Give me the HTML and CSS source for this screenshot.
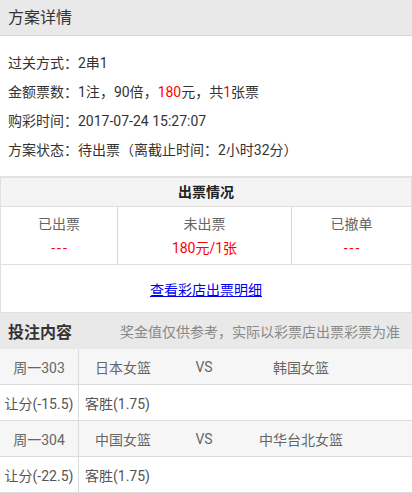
FILE: index.html
```html
<!DOCTYPE html>
<html lang="zh">
<head>
<meta charset="utf-8">
<link rel="stylesheet" href="styles.css">
</head>
<body>
<div class="bar title">方案详情</div>
<div class="details">
  <div class="line">过关方式<span class="p">：</span>2串1</div>
  <div class="line">金额票数<span class="p">：</span>1注<span class="p">，</span>90倍<span class="p">，</span><span class="red">180</span>元<span class="p">，</span>共<span class="red">1</span>张票</div>
  <div class="line">购彩时间<span class="p">：</span>2017-07-24 15:27:07</div>
  <div class="line">方案状态<span class="p">：</span>待出票<span class="p">（</span>离截止时间<span class="p">：</span>2小时32分<span class="p">）</span></div>
</div>
<div class="ticket">
  <div class="ticket-head">出票情况</div>
  <div class="ticket-cells">
    <div class="cell c1"><div class="label">已出票</div><div class="red dash">---</div></div>
    <div class="cell c2"><div class="label">未出票</div><div class="red">180元/1张</div></div>
    <div class="cell c3"><div class="label">已撤单</div><div class="red dash">---</div></div>
  </div>
  <div class="link-row"><a href="#" class="link">查看彩店出票明细</a></div>
</div>
<div class="bar bet-title"><span class="bt">投注内容</span><span class="note">奖金值仅供参考<span class="p">，</span>实际以彩票店出票彩票为准</span></div>
<div class="bets">
  <div class="row match"><div class="num">周一303</div><div class="team">日本女篮</div><div class="vs">VS</div><div class="team">韩国女篮</div><div></div></div>
  <div class="row pick"><div class="num">让分(-15.5)</div><div class="sel">客胜(1.75)</div></div>
  <div class="row match"><div class="num">周一304</div><div class="team">中国女篮</div><div class="vs">VS</div><div class="team">中华台北女篮</div><div></div></div>
  <div class="row pick"><div class="num">让分(-22.5)</div><div class="sel">客胜(1.75)</div></div>
</div>
</body>
</html>
```
FILE: styles.css
```css
* { box-sizing: border-box; }
body {
  margin: 0;
  font-family: Roboto, "Noto Sans CJK SC", sans-serif;
  font-size: 14px;
  color: #333;
  background: #fff;
}
.red { color: #f00; }
.p { font-family: "Noto Sans CJK TC", sans-serif; }
.dash { letter-spacing: 2px; padding-left: 2px; }
.bar {
  background: #e9e9e9;
  padding-left: 8px;
}
.title {
  height: 36px;
  line-height: 35px;
  font-size: 16px;
  border-bottom: 1px solid #d4d4d4;
  color: #333;
}
.details {
  padding: 12px 8px 12px;
}
.line {
  line-height: 29px;
  height: 29px;
  white-space: nowrap;
}
.ticket {
  border: 1px solid #e0e0e0;
  border-top: 2px solid #e2e2e2;
}
.ticket-head {
  background: #f4f4f4;
  text-align: center;
  font-weight: bold;
  color: #222;
  line-height: 28px;
  height: 29px;
  border-bottom: 1px solid #dedede;
}
.ticket-cells {
  display: grid;
  grid-template-columns: 116px 174px 1fr;
  border-bottom: 1px solid #dedede;
}
.cell {
  text-align: center;
  line-height: 24px;
  padding: 5px 0 4px;
}
.c2, .c3 { border-left: 1px solid #d8d8d8; }
.label { color: #666; }
.link-row {
  height: 47px;
  display: flex;
  align-items: center;
  justify-content: center;
}
.link { color: #00e; text-decoration: underline; }
.bet-title {
  height: 36px;
  display: flex;
  align-items: center;
  justify-content: space-between;
  padding-right: 12px;
}
.bt { font-size: 16px; font-weight: bold; color: #333; }
.note { color: #888; font-size: 14px; }
.row {
  display: grid;
  grid-template-columns: 79px 88px 74px 120px 1fr;
  height: 36px;
  align-items: stretch;
  border-bottom: 1px solid #dcdcdc;
  color: #666;
}
.row > div { display: flex; align-items: center; justify-content: center; }
.match { background: #f6f6f6; }
.pick { grid-template-columns: 79px 1fr; color: #555; }
.num { border-right: 1px solid #dcdcdc; white-space: nowrap; }
.pick .sel { justify-content: flex-start; padding-left: 6px; }
```
